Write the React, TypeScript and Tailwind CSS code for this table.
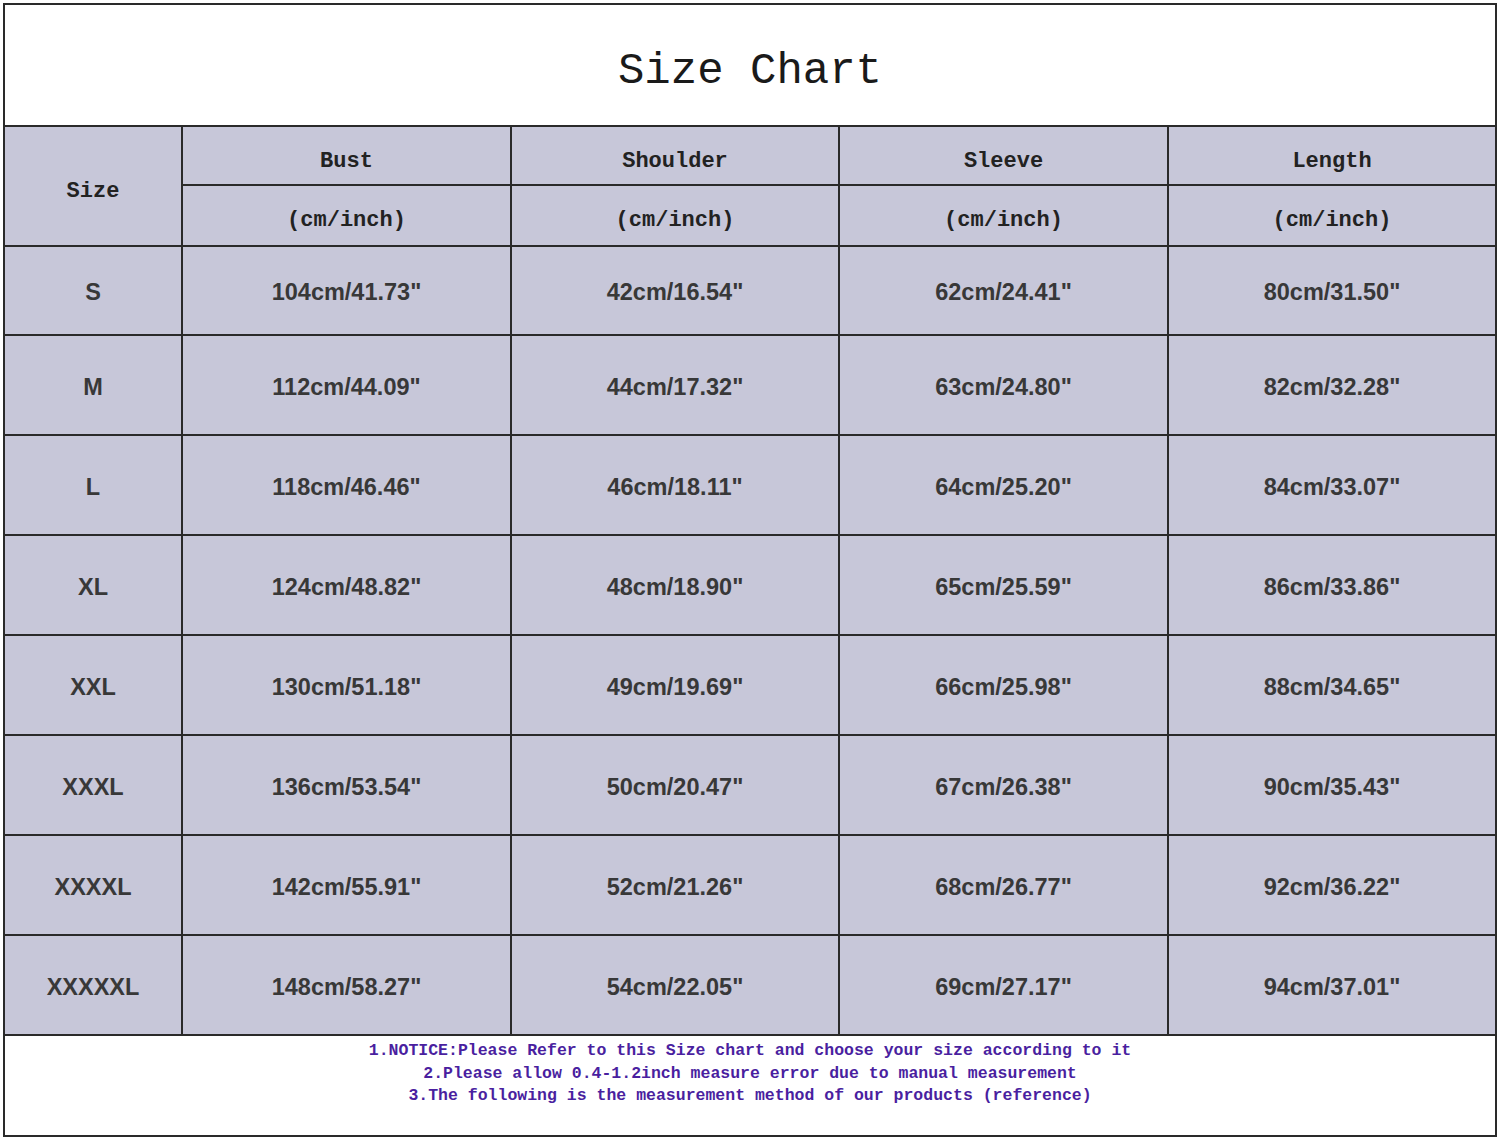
const headers = ['Bust', 'Shoulder', 'Sleeve', 'Length'];

const rows: [string, string, string, string, string][] = [
  ['S', '104cm/41.73"', '42cm/16.54"', '62cm/24.41"', '80cm/31.50"'],
  ['M', '112cm/44.09"', '44cm/17.32"', '63cm/24.80"', '82cm/32.28"'],
  ['L', '118cm/46.46"', '46cm/18.11"', '64cm/25.20"', '84cm/33.07"'],
  ['XL', '124cm/48.82"', '48cm/18.90"', '65cm/25.59"', '86cm/33.86"'],
  ['XXL', '130cm/51.18"', '49cm/19.69"', '66cm/25.98"', '88cm/34.65"'],
  ['XXXL', '136cm/53.54"', '50cm/20.47"', '67cm/26.38"', '90cm/35.43"'],
  ['XXXXL', '142cm/55.91"', '52cm/21.26"', '68cm/26.77"', '92cm/36.22"'],
  ['XXXXXL', '148cm/58.27"', '54cm/22.05"', '69cm/27.17"', '94cm/37.01"'],
];

const mono = "font-['Liberation_Mono','DejaVu_Sans_Mono',monospace]";
const sans = "font-['Liberation_Sans',Arial,sans-serif]";

export default function App() {
  return (
    <div className="min-h-[1140px] w-[1500px] bg-white pt-[3px] pl-[3px]">
      <div className="w-[1494px] border-2 border-[#2a2a2a] bg-white">
        <div className={`flex h-[120px] items-center justify-center pt-[12px] text-[44px] text-[#1a1a1a] ${mono}`}>
          Size Chart
        </div>

        <div
          className="grid gap-[2px] border-t-2 border-[#2a2a2a] bg-[#2a2a2a]"
          style={{
            gridTemplateColumns: '176px 327px 326px 327px 1fr',
            gridTemplateRows: '57px 59px 87px repeat(7, 98px)',
          }}
        >
          <div className={`row-span-2 flex items-center justify-center bg-[#c7c7d9] pt-[10px] text-[22px] font-bold text-[#222] ${mono}`}>
            Size
          </div>
          {headers.map((h) => (
            <div
              key={h}
              className={`flex items-center justify-center bg-[#c7c7d9] pt-[12px] text-[22px] font-bold text-[#222] ${mono}`}
            >
              {h}
            </div>
          ))}
          {headers.map((h) => (
            <div
              key={h + '-unit'}
              className={`flex items-center justify-center bg-[#c7c7d9] pt-[10px] text-[22px] font-bold text-[#222] ${mono}`}
            >
              (cm/inch)
            </div>
          ))}
          {rows.map((r) =>
            r.map((cell, i) => (
              <div
                key={r[0] + i}
                className={`flex items-center justify-center bg-[#c7c7d9] pt-[5px] text-[23.5px] font-bold text-[#383838] ${sans}`}
              >
                {cell}
              </div>
            ))
          )}
        </div>

        <div
          className={`flex h-[101px] flex-col items-center border-t-2 border-[#2a2a2a] pt-[4px] text-[16.5px] leading-[22.5px] font-bold text-[#4a1fa0] ${mono}`}
        >
          <p>1.NOTICE:Please Refer to this Size chart and choose your size according to it</p>
          <p>2.Please allow 0.4-1.2inch measure error due to manual measurement</p>
          <p>3.The following is the measurement method of our products (reference)</p>
        </div>
      </div>
    </div>
  );
}
